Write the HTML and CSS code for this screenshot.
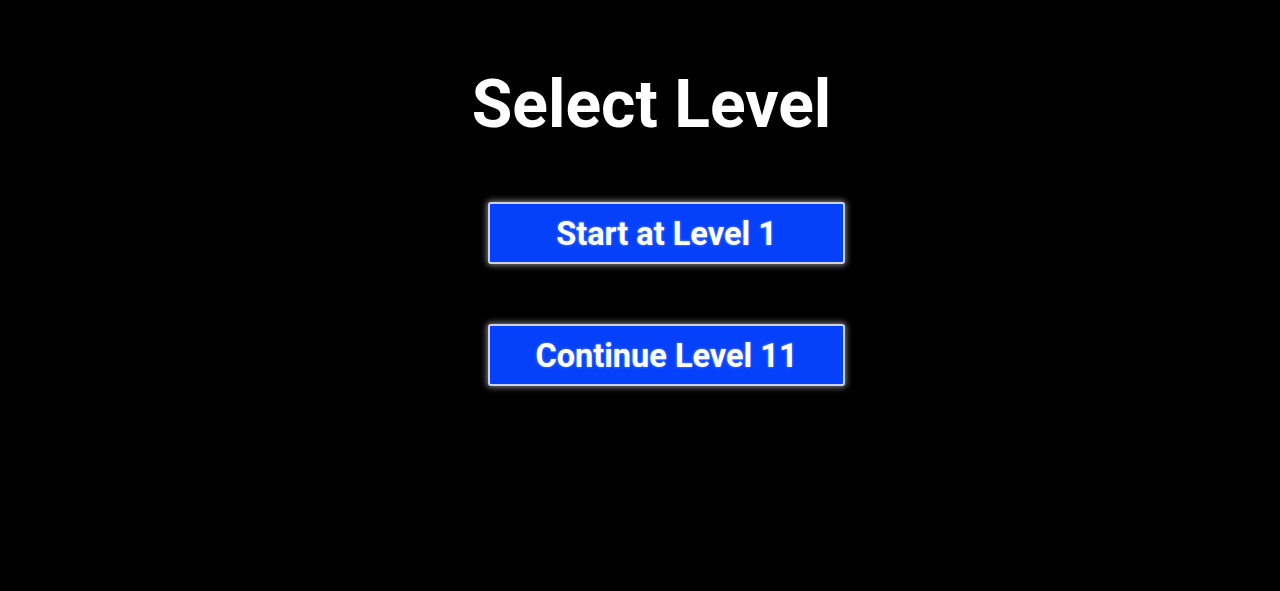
FILE: index.html
```html
<!DOCTYPE html>
<html lang="en">
<head>
<meta charset="utf-8">
<title>Select Level</title>
<link rel="stylesheet" href="styles.css">
</head>
<body>
<main class="menu">
  <h1 class="menu-title">Select Level</h1>
  <div class="menu-buttons">
    <button class="level-btn" type="button">Start at Level 1</button>
    <button class="level-btn" type="button">Continue Level 11</button>
  </div>
</main>
</body>
</html>
```

FILE: styles.css
```css
html, body {
  margin: 0;
  padding: 0;
  background: #000;
  height: 100%;
}
body {
  font-family: Roboto, "Liberation Sans", sans-serif;
  color: #fff;
}
.menu {
  display: flex;
  flex-direction: column;
  align-items: center;
  padding-top: 65px;
}
.menu-title {
  margin: 0 0 0 23px;
  font-size: 66px;
  line-height: 80px;
  font-weight: 700;
  color: #fff;
}
.menu-buttons {
  display: flex;
  flex-direction: column;
  gap: 60px;
  margin: 57px 0 0 53px;
}
.level-btn {
  box-sizing: border-box;
  width: 357px;
  height: 62px;
  padding: 2px 0 0;
  background: #0541fb;
  border: 2px solid #cdd3e6;
  border-radius: 3px;
  box-shadow: 0 0 6px 1px rgba(255, 255, 255, 0.55);
  font-family: Roboto, "Liberation Sans", sans-serif;
  font-size: 32.5px;
  font-weight: 700;
  color: #fff;
  text-shadow: 0 0 3px rgba(255, 255, 255, 0.4);
  cursor: pointer;
}
```
